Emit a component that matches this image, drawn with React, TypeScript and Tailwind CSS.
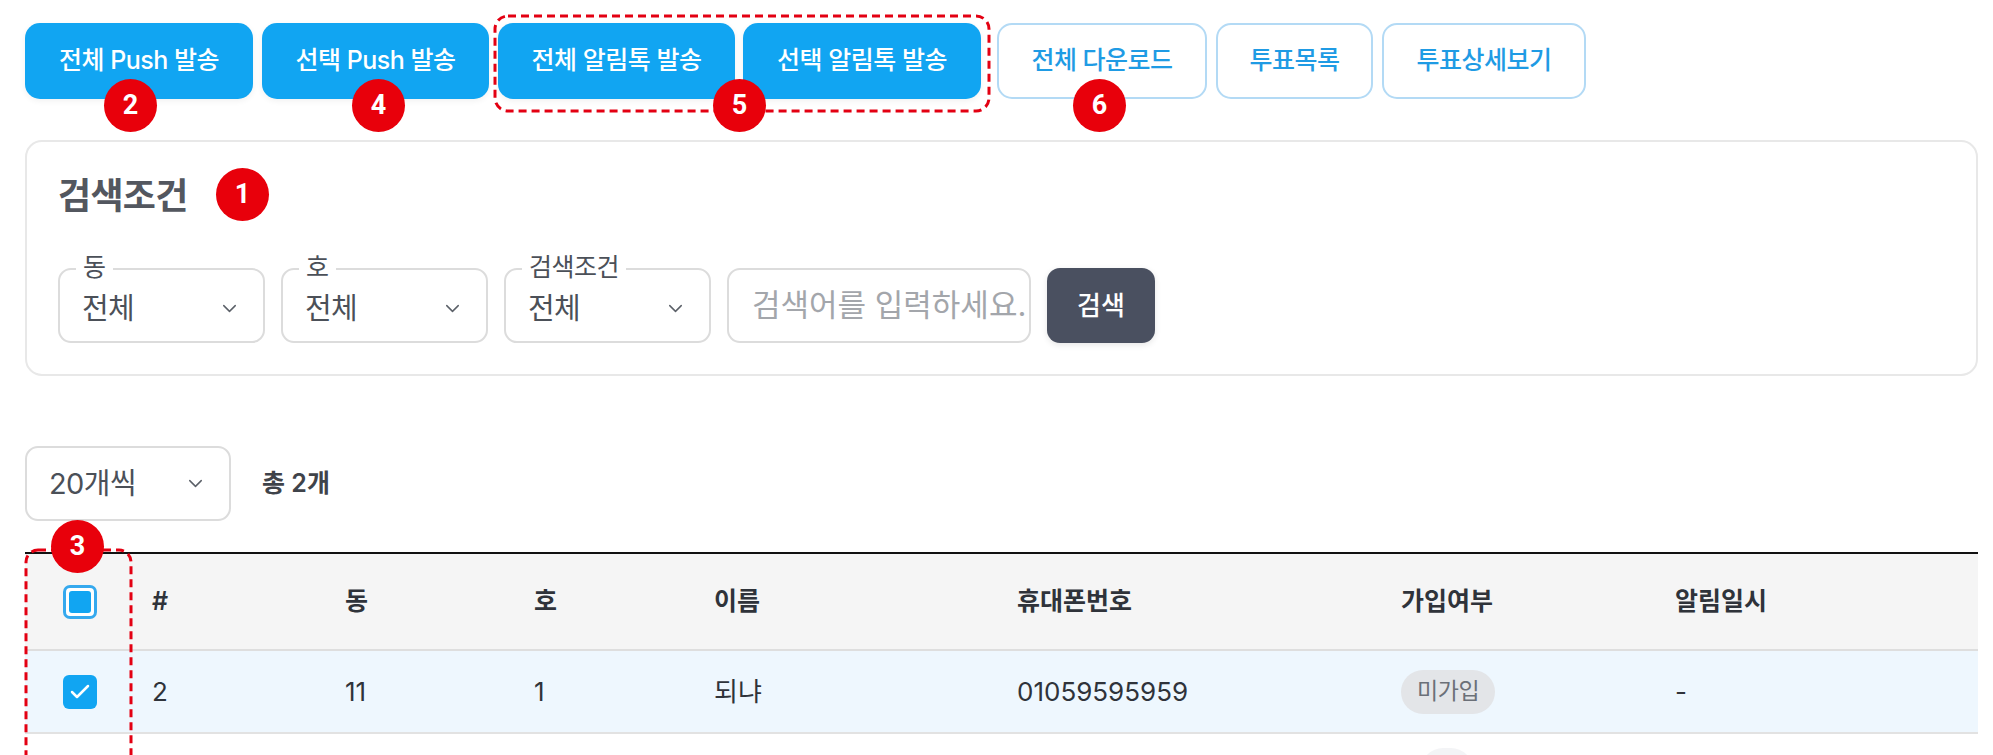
import { ChevronDown, Check } from "lucide-react";

const font = { fontFamily: 'Inter, "Noto Sans CJK KR", "Noto Sans", sans-serif' };

const solidBtn =
  "h-[76px] shrink-0 rounded-[15px] bg-[#11a5f2] text-[25px] font-medium tracking-[-0.02em] text-white shadow-[0_2px_6px_rgba(0,0,0,0.06)]";
const outlineBtn =
  "h-[76px] shrink-0 rounded-[15px] border-2 border-[#b3daf5] bg-white text-[25px] font-medium tracking-[-0.02em] text-[#1f9be4]";

function Badge({ n, className }: { n: number; className: string }) {
  return (
    <div
      className={
        "absolute flex h-[53px] w-[53px] items-center justify-center rounded-full bg-[#e8000b] text-[27px] font-bold text-white " +
        className
      }
      style={{ fontFamily: 'Roboto, "Liberation Sans", sans-serif' }}
    >
      {n}
    </div>
  );
}

function OutlinedSelect({ label, value, width }: { label: string; value: string; width: string }) {
  return (
    <div className={"relative h-[75px] shrink-0 rounded-[13px] border-2 border-[#dcdcdc] " + width}>
      <span className="absolute -top-[19px] left-[16px] bg-white px-[7px] text-[25px] leading-[32px] tracking-[-0.02em] text-[#4b5058]">
        {label}
      </span>
      <div className="flex h-full items-center justify-between pl-[22px] pr-[22px] pt-[6px]">
        <span className="text-[29px] tracking-[-0.02em] text-[#4b5058]">{value}</span>
        <ChevronDown className="h-[23px] w-[23px] text-[#5b6068]" strokeWidth={1.5} />
      </div>
    </div>
  );
}

const cols = "grid grid-cols-[110px_193px_189px_180px_303px_384px_274px_1fr]";

export default function App() {
  return (
    <div className="relative h-[755px] overflow-hidden bg-white pl-[25px] pr-[15px]" style={font}>
      {/* top action buttons */}
      <div className="flex items-start gap-[9px] pt-[23px]">
        <button className={solidBtn + " w-[228px]"}>전체 Push 발송</button>
        <button className={solidBtn + " w-[227px]"}>선택 Push 발송</button>
        <button className={solidBtn + " w-[237px]"}>전체 알림톡 발송</button>
        <button className={solidBtn + " -ml-[1px] w-[238px]"}>선택 알림톡 발송</button>
        <button className={outlineBtn + " ml-[7px] w-[210px]"}>전체 다운로드</button>
        <button className={outlineBtn + " w-[157px]"}>투표목록</button>
        <button className={outlineBtn + " w-[204px]"}>투표상세보기</button>
      </div>

      {/* search card */}
      <div className="mt-[41px] rounded-[17px] border-2 border-[#e8e8e8] bg-white pb-[31px] pl-[31px] pt-[34px]">
        <h2 className="text-[36px] font-bold leading-[40px] tracking-[-0.02em] text-[#53575f]">검색조건</h2>
        <div className="mt-[52px] flex items-center gap-[16px]">
          <OutlinedSelect label="동" value="전체" width="w-[207px]" />
          <OutlinedSelect label="호" value="전체" width="w-[207px]" />
          <OutlinedSelect label="검색조건" value="전체" width="w-[207px]" />
          <div className="flex h-[75px] w-[304px] shrink-0 items-center overflow-hidden whitespace-nowrap rounded-[13px] border-2 border-[#dcdcdc] pl-[23px]">
            <span className="text-[31px] text-[#a3a6ab]">검색어를 입력하세요.</span>
          </div>
          <button className="h-[75px] w-[108px] shrink-0 rounded-[13px] bg-[#4a5060] text-[26px] font-medium text-white shadow-[0_2px_6px_rgba(0,0,0,0.1)]">
            검색
          </button>
        </div>
      </div>

      {/* page size + total */}
      <div className="mt-[70px] flex items-center gap-[31px]">
        <div className="flex h-[75px] w-[206px] items-center justify-between rounded-[13px] border-2 border-[#dcdcdc] pl-[22px] pr-[22px]">
          <span className="text-[29px] tracking-[-0.02em] text-[#4b5058]">20개씩</span>
          <ChevronDown className="h-[23px] w-[23px] text-[#5b6068]" strokeWidth={1.5} />
        </div>
        <span className="text-[25px] font-semibold text-[#3f434a]">총 2개</span>
      </div>

      {/* table */}
      <div className="mt-[31px] border-t-2 border-[#111111] text-[#2f333a]">
        <div className={cols + " h-[97px] items-center border-b-2 border-[#dedede] bg-[#f5f5f5] text-[25px] font-semibold"}>
          <div className="flex justify-center">
            <div className="h-[34px] w-[34px] rounded-[7px] border-[3px] border-[#35a9ee] bg-white p-[3px]">
              <div className="h-full w-full rounded-[3px] bg-[#11a5f2]" />
            </div>
          </div>
          <div className="pl-[17px]">#</div>
          <div className="pl-[17px]">동</div>
          <div className="pl-[17px]">호</div>
          <div className="pl-[17px]">이름</div>
          <div className="pl-[17px]">휴대폰번호</div>
          <div className="pl-[17px]">가입여부</div>
          <div className="pl-[17px]">알림일시</div>
        </div>
        <div className={cols + " h-[83px] items-center border-b-2 border-[#e2e2e2] bg-[#eef7fe] text-[26px]"}>
          <div className="flex justify-center">
            <div className="flex h-[34px] w-[34px] items-center justify-center rounded-[6px] bg-[#11a5f2]">
              <Check className="h-[24px] w-[24px] text-white" strokeWidth={2.5} />
            </div>
          </div>
          <div className="pl-[17px]">2</div>
          <div className="pl-[17px]">11</div>
          <div className="pl-[17px]">1</div>
          <div className="pl-[17px]">되냐</div>
          <div className="pl-[17px]">01059595959</div>
          <div className="pl-[17px]">
            <span className="inline-flex h-[44px] items-center rounded-full bg-[#e3e5e8] px-[16px] text-[23px] tracking-[-0.02em] text-[#6b7078]">
              미가입
            </span>
          </div>
          <div className="pl-[17px]">-</div>
        </div>
        {/* next row, only its top edge falls inside the window */}
        <div className={cols + " h-[83px] bg-white"}>
          <div />
          <div />
          <div />
          <div />
          <div />
          <div />
          <div className="pl-[37px] pt-[14px]">
            <div className="h-[44px] w-[52px] rounded-full bg-[#f3f4f6]" />
          </div>
          <div />
        </div>
      </div>

      {/* annotation overlays */}
      <svg className="pointer-events-none absolute left-[493px] top-[14px]" width="498" height="99">
        <rect x="2" y="2" width="494" height="95" rx="13" fill="none" stroke="#e30012" strokeWidth="3" strokeDasharray="8 5" />
      </svg>
      <svg className="pointer-events-none absolute left-[24px] top-[548px]" width="109" height="220">
        <rect x="2" y="2" width="105" height="260" rx="12" fill="none" stroke="#e30012" strokeWidth="3" strokeDasharray="8 5" />
      </svg>
      <Badge n={2} className="left-[104px] top-[79px]" />
      <Badge n={4} className="left-[352px] top-[79px]" />
      <Badge n={5} className="left-[713px] top-[79px]" />
      <Badge n={6} className="left-[1073px] top-[79px]" />
      <Badge n={1} className="left-[216px] top-[168px]" />
      <Badge n={3} className="left-[51px] top-[520px]" />
    </div>
  );
}
